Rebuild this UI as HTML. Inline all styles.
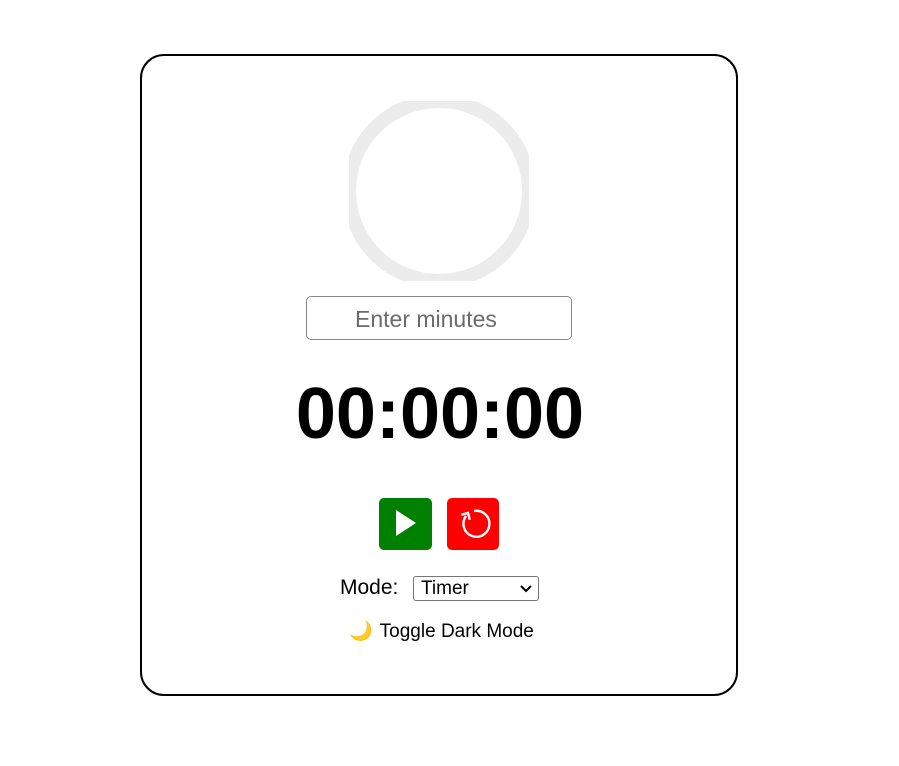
<!DOCTYPE html>
<html><head><style>
body{margin:0;background:#fff;font-family:"Liberation Sans",Arial,sans-serif;width:899px;height:766px;position:relative;overflow:hidden}
.card{position:absolute;left:140px;top:54px;width:594px;height:638px;border:2.5px solid #000;border-radius:24px}
.abs{position:absolute}
.inp{left:306px;top:296px;width:264px;height:42px;border:1px solid #888;border-radius:5px;font-size:23px;color:#6b6b6b;line-height:44px;padding-left:0}
.time{left:240px;width:400px;top:369px;text-align:center;font-weight:bold;font-size:72px;line-height:90px}
.btn{top:498px;width:53px;height:52px;border-radius:5px}
</style></head><body>
<div class="card"></div>
<svg class="abs" style="left:349px;top:101px" width="180" height="180"><circle cx="90" cy="90" r="90" fill="none" stroke="#ececec" stroke-width="14"/></svg>
<div class="abs inp"><span style="margin-left:48px">Enter minutes</span></div>
<div class="abs time">00:00:00</div>
<div class="abs btn" style="left:379px;background:#008000"><svg width="53" height="52"><polygon points="17,12 37,25 17,38" fill="#fff"/></svg></div>
<div class="abs btn" style="left:447px;width:52px;background:#f00"><svg width="52" height="52"><path d="M19 18 A13 13 0 1 0 27 13" fill="none" stroke="#fff" stroke-width="2.4"/><polyline points="14,15 21,15 21,22" fill="none" stroke="#fff" stroke-width="2.4" transform="rotate(-15 21 15)"/></svg></div>
<div class="abs" style="left:340px;top:576px;font-size:21px">Mode:</div>
<div class="abs" style="left:413px;top:576px;width:124px;height:23px;border:1px solid #767676;border-radius:3px;font-size:19px;line-height:23px;box-sizing:content-box"><span style="margin-left:7px">Timer</span><svg class="abs" style="right:6px;top:7px" width="12" height="9"><polyline points="1,2 6,7 11,2" fill="none" stroke="#000" stroke-width="2"/></svg></div>
<div class="abs" style="left:349px;top:619px;font-size:19px"><span style="color:#e0a040">🌙</span><span style="margin-left:7px">Toggle Dark Mode</span></div>
</body></html>
